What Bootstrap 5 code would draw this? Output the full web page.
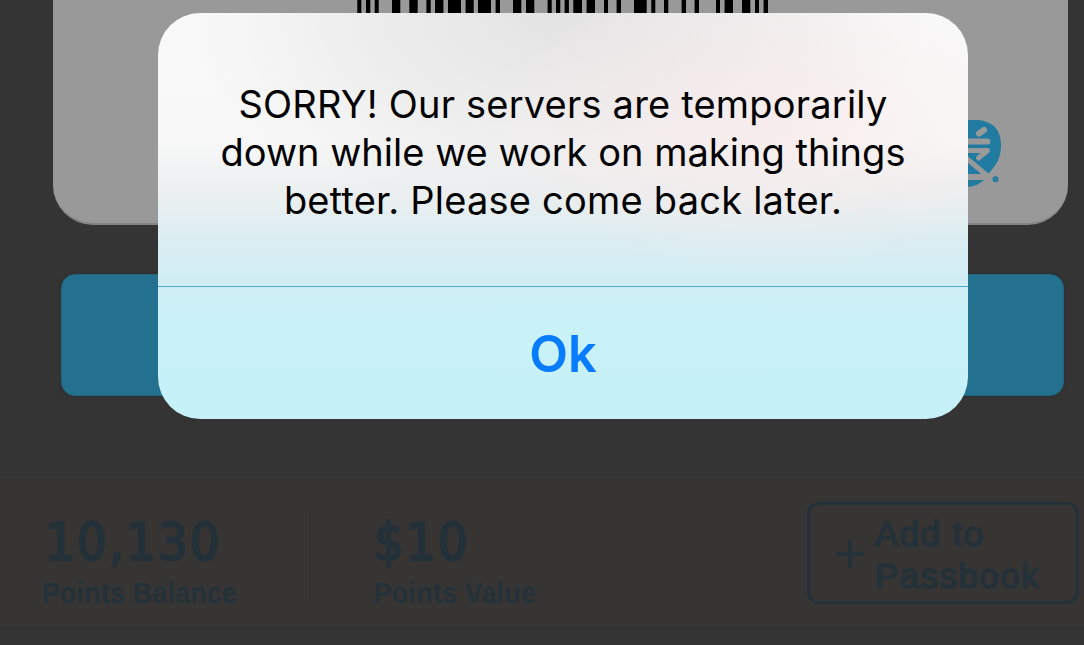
<!DOCTYPE html>
<html lang="en">
<head>
<meta charset="utf-8">
<meta name="viewport" content="width=device-width, initial-scale=1">
<title>Rewards card</title>
<link href="https://cdn.jsdelivr.net/npm/bootstrap@5.3.0/dist/css/bootstrap.min.css" rel="stylesheet">
<style>
  body { background: #343434; width: 1084px; height: 645px; font-family: "Liberation Sans", Arial, sans-serif; }
  .pass-card { margin: 0 16px 0 53px; height: 225px; background: #999; border: 0; border-bottom: 2px solid #838383; border-radius: 0 0 40px 40px; }
  .barcode { display: block; width: 412px; height: 14px; margin-left: 304px; }
  .pin-logo { display: block; width: 76px; height: 70px; margin: 105px 64px 0 auto; }
  .action { display: block; margin: 49px 20px 0 61px; height: 122px; width: auto; background: #24708f; border: 1px solid #246580; border-radius: 14px; box-shadow: 0 0 3px #272c2e; }
  .stats { margin-top: 78px; height: 155px; background: #373434; border-top: 2px solid #333131; border-bottom: 2px solid #333131; color: #243138; }
  .stat-a { width: 311px; padding: 34px 0 0 42px; }
  .stat-b { width: 496px; padding: 34px 0 0 63px; }
  .rule { width: 1px; height: 92px; margin: 36px 0 0 -1px; background: #323031; }
  .figure-num { font: 400 52px/64px "DejaVu Sans Condensed", "DejaVu Sans", sans-serif; font-stretch: condensed; letter-spacing: 2.2px; height: 65px; white-space: nowrap; -webkit-text-stroke: 2.4px #243138; }
  .stat-a .figure-num { padding-left: 3px; }
  .figure-label { font-size: 30px; line-height: 36px; font-weight: 700; white-space: nowrap; letter-spacing: .5px; transform: scaleX(.88); transform-origin: 0 0; }
  .passbook { width: 272px; height: 102px; margin-top: 26px; border: 3px solid #243138; border-radius: 12px; font-size: 35px; line-height: 42px; color: #243138; padding: 8px 0 0 26px; letter-spacing: 1.4px; -webkit-text-stroke: 1.5px #243138; }
  .plus { width: 28px; height: 28px; flex: none; margin: 27px 11px 0 0; }
  .alert-box { left: 158px; top: 13px; width: 810px; height: 406px; border-radius: 42px; overflow: hidden; font-family: Inter, sans-serif;
    background:
      radial-gradient(ellipse 270px 150px at 610px 112px, rgba(250,232,232,.65), rgba(250,232,232,0)),
      radial-gradient(ellipse 370px 205px at 400px 0, rgba(226,225,226,.9), rgba(228,227,228,.5) 55%, rgba(232,232,233,0)),
      linear-gradient(#f9f9fa 0, #f8f8f8 125px, #eceff0 180px, #d8edf2 235px, #d0eef5 273px, #c9f1f8 310px, #c6f1f8 406px); }
  .alert-copy { height: 274px; padding-top: 67px; border-bottom: 1px solid #45acce; color: #000; font-size: 38px; line-height: 48px; }
  .l1 { letter-spacing: .2px; } .l2 { letter-spacing: .02px; } .l3 { letter-spacing: .22px; }
  .ok-btn { height: 132px; color: #087cff; font-size: 50.5px; font-weight: 600; border: 0; background: none; padding: 2px 0 0; }
</style>
</head>
<body class="overflow-hidden position-relative m-0">
<main>
  <section class="card pass-card">
    <svg class="barcode" viewBox="357 0 412 14" fill="#000">
      <path d="M357.3 0h4v14h-4zM366 0h4.3v14H366zM374.7 0h4v14h-4zM392 0h8.3v14H392zM409.3 0h8.4v14h-8.4zM426.4 0h4.3v14h-4.3zM435 0h8.4v14H435zM448 0h13v14h-13zM465.6 0h8.1v14h-8.1zM478 0h13v14h-13zM495.6 0h4.4v14h-4.4zM513 0h8.3v14H513zM526 0h8.3v14H526zM547.6 0h4.1v14h-4.1zM556 0h4.3v14H556zM564.6 0h4.3v14h-4.3zM573.3 0h8.7v14h-8.7zM586.6 0h8.4v14h-8.4zM604 0h4v14h-4zM616.6 0h4.4v14h-4.4zM634 0h12.7v14H634zM651.3 0h4v14h-4zM664 0h4.3v14H664zM681.6 0h4.4v14h-4.4zM694.6 0h4.4v14h-4.4zM716 0h4v14h-4zM724.6 0h8.4v14h-8.4zM742 0h8.3v14H742zM755 0h4v14h-4zM763.6 0h4.4v14h-4.4z"/>
    </svg>
    <svg class="pin-logo" viewBox="928 119 76 70">
      <path fill="#217ba0" d="M966 120H979Q1001 123 1001 145C1001 157 997 165 988 174L985 179C980 184 973 187 966 187Z"/>
      <g stroke="#999" stroke-width="6" stroke-linecap="round" fill="none">
        <path d="M979 133.500L984 130M964 141.500H987.500"/>
        <path stroke-width="5" stroke-linejoin="round" d="M964 150.500H987.500L978.500 158"/>
        <path stroke-width="5" stroke-linecap="butt" d="M963 155.500L990 178"/>
        <path stroke-width="6" stroke-linecap="butt" d="M964 177H991"/>
      </g>
      <circle cx="995.500" cy="179.300" r="3" fill="#217ba0"/>
      <circle cx="995.500" cy="179.300" r="1.300" fill="none" stroke="#4b87a0" stroke-width=".6"/>
    </svg>
  </section>
  <div class="action"></div>
  <section class="stats d-flex">
    <div class="stat-a"><div class="figure-num">10,130</div><div class="figure-label">Points Balance</div></div>
    <div class="rule"></div>
    <div class="stat-b"><div class="figure-num">$10</div><div class="figure-label">Points Value</div></div>
    <div class="passbook d-flex flex-shrink-0">
      <svg class="plus" viewBox="0 0 28 28"><path d="M0 14H28M14 0V28" stroke="#243138" stroke-width="4"/></svg>
      <div>Add to<br>Passbook</div>
    </div>
  </section>
</main>
<div class="alert-box position-absolute" role="alertdialog">
  <div class="alert-copy text-center text-nowrap"><div class="l1">SORRY! Our servers are temporarily</div><div class="l2">down while we work on making things</div><div class="l3">better. Please come back later.</div></div>
  <button class="ok-btn w-100 d-flex align-items-center justify-content-center">Ok</button>
</div>
<script src="https://cdn.jsdelivr.net/npm/bootstrap@5.3.0/dist/js/bootstrap.bundle.min.js"></script>
</body>
</html>
